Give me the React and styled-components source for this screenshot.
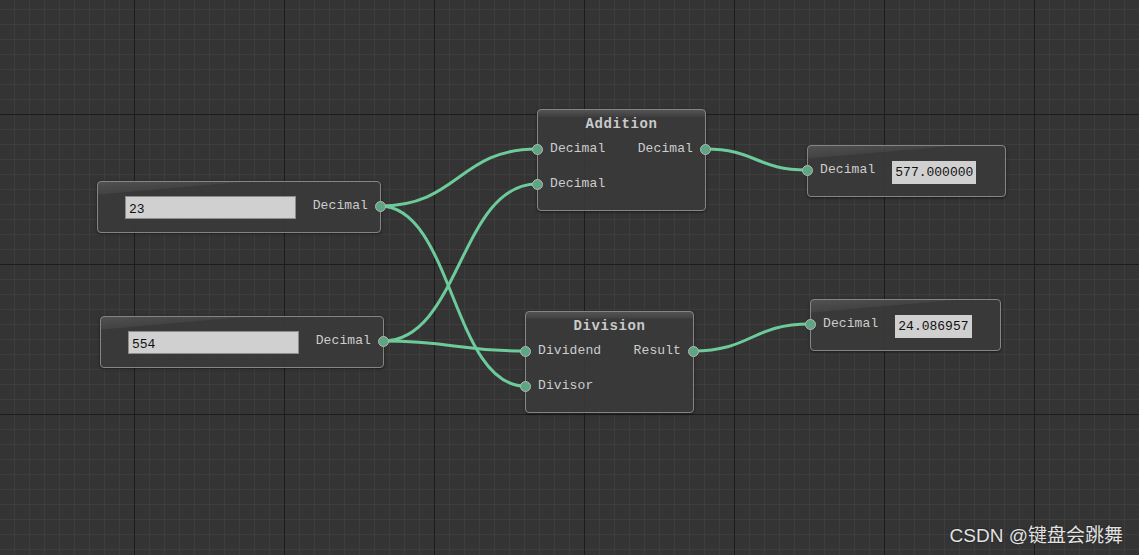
import React from 'react';
import styled, { createGlobalStyle } from 'styled-components';

const GlobalStyle = createGlobalStyle`
  html, body {
    margin: 0;
    padding: 0;
    background: #353535;
    overflow: hidden;
  }
`;

const Canvas = styled.div`
  position: relative;
  width: 1139px;
  height: 555px;
  overflow: hidden;
  background-color: #343434;
  background-image:
    linear-gradient(to right, #1c1c1c 1px, transparent 1px),
    linear-gradient(to bottom, #1c1c1c 1px, transparent 1px),
    linear-gradient(to right, #3d3d3d 1px, transparent 1px),
    linear-gradient(to bottom, #3d3d3d 1px, transparent 1px);
  background-size: 150px 150px, 150px 150px, 15px 15px, 15px 15px;
  background-position: 134px 0, 0 114px, 14px 0, 0 9px;
  font-family: "Liberation Mono", "DejaVu Sans Mono", monospace;
`;

const Wires = styled.svg`
  position: absolute;
  left: 0;
  top: 0;
  pointer-events: none;
`;

// nodes sit on a free canvas, so their place is the content
const Node = styled.div`
  position: absolute;
  left: ${(p) => p.x}px;
  top: ${(p) => p.y}px;
  width: ${(p) => p.w}px;
  height: ${(p) => p.h}px;
  box-sizing: border-box;
  border: 1px solid #858585;
  border-radius: 4px;
  background:
    linear-gradient(to bottom, rgba(255, 255, 255, 0.13) 0, rgba(255, 255, 255, 0.05) 6px, transparent 7px),
    rgba(58, 58, 58, 0.9);
  box-shadow: 0 1px 3px rgba(0, 0, 0, 0.5);
  color: #cdcdcd;
  font-size: 13px;
`;

const ValueNode = styled(Node)`
  background:
    linear-gradient(175deg, rgba(255, 255, 255, 0.12) 0, rgba(255, 255, 255, 0.05) 12px, transparent 13px),
    rgba(58, 58, 58, 0.9);
  display: flex;
  align-items: center;
`;

const InputField = styled.div`
  box-sizing: border-box;
  width: 171px;
  height: 23px;
  margin-left: 27px;
  margin-top: 1px;
  padding: 5px 3px 0;
  background: #d0d0d0;
  border: 1px solid #8c8c8c;
  color: #111;
  font-size: 13px;
  line-height: 16px;
`;

const Label = styled.span`
  position: relative;
  white-space: nowrap;
  line-height: 20px;
  letter-spacing: 0.1px;
`;

const RightLabel = styled(Label)`
  margin-left: auto;
  margin-right: 12px;
  margin-top: -3px;
`;

const LeftLabel = styled(Label)`
  margin-left: 12px;
  margin-top: -3px;
`;

const ValueBox = styled.span`
  margin-left: 17px;
  margin-top: 2px;
  padding: 1px 3px 0;
  height: 22px;
  line-height: 22px;
  background: #d0d0d0;
  color: #111;
  font-size: 13px;
`;

const Title = styled.div`
  margin-top: 5px;
  text-align: center;
  font-weight: bold;
  font-size: 14px;
  line-height: 18px;
  letter-spacing: 0.6px;
  color: #cacaca;
`;

const Rows = styled.div`
  margin-top: 6px;
  display: flex;
  flex-direction: column;
  gap: 15px;
`;

const Row = styled.div`
  display: flex;
  align-items: center;
  justify-content: space-between;
  height: 20px;
  padding: 0 12px;
`;

const EdgePort = styled.span`
  position: absolute;
  top: ${(p) => p.y}px;
  ${(p) => p.side}: -6px;
  width: 9px;
  height: 9px;
  border-radius: 50%;
  background: #5ea683;
  border: 1px solid #b5b5b5;
`;

const Watermark = styled.div`
  position: absolute;
  right: 16px;
  bottom: 8px;
  font-family: "Liberation Sans", "Noto Sans CJK SC", sans-serif;
  font-size: 19px;
  color: #e2e2e2;
  text-shadow: 0 0 2px rgba(0, 0, 0, 0.6);
`;

const wire = (x1, y1, x2, y2) => {
  const dx = Math.abs(x2 - x1) / 2;
  return `M${x1},${y1} C${x1 + dx},${y1} ${x2 - dx},${y2} ${x2},${y2}`;
};

const links = [
  [380, 206, 537, 149],
  [380, 206, 525, 386],
  [383, 341, 537, 184],
  [383, 341, 525, 351],
  [705, 149, 807, 170],
  [693, 351, 810, 324],
];

const InputNode = ({ x, y, value }) => (
  <ValueNode x={x} y={y} w={284} h={52}>
    <InputField>{value}</InputField>
    <RightLabel>Decimal</RightLabel>
    <EdgePort side="right" y={19} />
  </ValueNode>
);

const OutputNode = ({ x, y, w, value }) => (
  <ValueNode x={x} y={y} w={w} h={52}>
    <EdgePort side="left" y={19} />
    <LeftLabel>Decimal</LeftLabel>
    <ValueBox>{value}</ValueBox>
  </ValueNode>
);

const OpNode = ({ x, y, title, rows }) => (
  <Node x={x} y={y} w={169} h={102}>
    <Title>{title}</Title>
    <Rows>
      {rows.map(([l, r], i) => (
        <Row key={i}>
          <Label>{l}</Label>
          <Label>{r}</Label>
        </Row>
      ))}
    </Rows>
    <EdgePort side="left" y={34} />
    <EdgePort side="left" y={69} />
    <EdgePort side="right" y={34} />
  </Node>
);

const App = () => (
  <>
    <GlobalStyle />
    <Canvas>
      <Wires width="1139" height="555">
        {links.map((l, i) => (
          <path key={i} d={wire(...l)} fill="none" stroke="#6dcb9b" strokeWidth="3" strokeLinecap="round" />
        ))}
      </Wires>
      <InputNode x={97} y={181} value="23" />
      <InputNode x={100} y={316} value="554" />
      <OpNode x={537} y={109} title="Addition" rows={[['Decimal', 'Decimal'], ['Decimal', '']]} />
      <OpNode x={525} y={311} title="Division" rows={[['Dividend', 'Result'], ['Divisor', '']]} />
      <OutputNode x={807} y={145} w={199} value="577.000000" />
      <OutputNode x={810} y={299} w={191} value="24.086957" />
      <Watermark>CSDN @键盘会跳舞</Watermark>
    </Canvas>
  </>
);

export default App;
